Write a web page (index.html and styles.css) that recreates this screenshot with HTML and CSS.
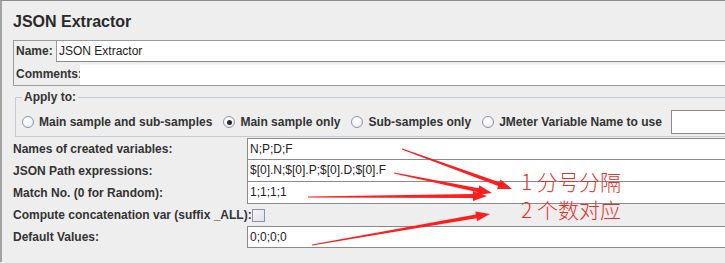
FILE: index.html
```html
<!DOCTYPE html>
<html>
<head>
<meta charset="utf-8">
<link rel="stylesheet" href="styles.css">
</head>
<body>
<div class="panel">
  <h1 class="title">JSON Extractor</h1>
  <div class="namebox">
    <div class="nrow"><span class="lbl">Name:</span><div class="field name-field">JSON Extractor</div></div>
    <div class="crow"><span class="lbl">Comments:</span><div class="field comment-field"></div></div>
  </div>
  <fieldset class="apply">
    <legend>Apply to:</legend>
    <div class="radios">
      <span class="opt"><span class="radio"></span><span class="rlbl">Main sample and sub-samples</span></span>
      <span class="opt"><span class="radio on"></span><span class="rlbl">Main sample only</span></span>
      <span class="opt"><span class="radio"></span><span class="rlbl">Sub-samples only</span></span>
      <span class="opt"><span class="radio"></span><span class="rlbl">JMeter Variable Name to use</span></span>
      <span class="varfield"></span>
    </div>
  </fieldset>
  <div class="form">
    <span class="flbl">Names of created variables:</span><div class="field row-field">N;P;D;F</div>
    <span class="flbl">JSON Path expressions:</span><div class="field row-field">$[0].N;$[0].P;$[0].D;$[0].F</div>
    <span class="flbl">Match No. (0 for Random):</span><div class="field row-field">1;1;1;1</div>
    <span class="flbl">Compute concatenation var (suffix _ALL):</span><div class="chkcell"><span class="chk"></span></div>
    <span class="flbl">Default Values:</span><div class="field row-field">0;0;0;0</div>
  </div>
  <div class="note n1">1 分号分隔</div>
  <div class="note n2">2 个数对应</div>
  <svg class="arrows" width="725" height="263" viewBox="0 0 725 263">
    <polygon points="401.83,149.47 498.12,186.08 497.09,188.9 512,189 500.51,179.5 499.48,182.32 402.17,148.53"/>
    <polygon points="393.9,173.49 477.9,192.16 477.3,195.1 492,193 479.3,185.3 478.7,188.24 394.1,172.51"/>
    <polygon points="308,197.5 473,198.1 473,201.1 487,196 473,191.1 473,194.1 308,196.5"/>
    <polygon points="312.09,245.49 476.54,218.37 477.06,221.33 490,214 475.34,211.48 475.86,214.43 311.91,244.51"/>
  </svg>
</div>
</body>
</html>
```

FILE: styles.css
```css
html, body {
  margin: 0;
  padding: 0;
  background: #eeeeee;
  overflow: hidden;
}
body {
  width: 725px;
  height: 263px;
  font-family: "Liberation Sans", Arial, sans-serif;
  font-size: 12px;
  color: #222;
}
.panel {
  position: relative;
  height: 262px;
  border-top: 1px solid #8c8c8c;
  border-left: 2px solid #a3a3a3;
  padding-left: 11px;
  box-sizing: border-box;
  overflow: hidden;
}
.title {
  margin: 0;
  height: 38px;
  line-height: 41px;
  font-size: 16px;
  font-weight: bold;
  color: #2a2a2a;
}
.namebox {
  border: 1px solid #9a9a9a;
  border-right: none;
  height: 46px;
  box-sizing: border-box;
  margin-top: 1px;
}
.lbl, .flbl, legend, .rlbl {
  font-weight: bold;
  color: #333;
}
.nrow {
  display: flex;
  align-items: stretch;
  height: 21px;
}
.nrow .lbl {
  padding-left: 2px;
  width: 40px;
  line-height: 21px;
}
.field {
  background: #fff;
  font-weight: normal;
  color: #222;
  white-space: nowrap;
}
.name-field {
  flex: 1;
  border-left: 1px solid #9a9a9a;
  border-bottom: 1px solid #8a8a8a;
  line-height: 20px;
  padding-left: 2px;
}
.crow {
  display: flex;
  height: 23px;
  align-items: stretch;
}
.crow .lbl {
  padding-left: 2px;
  width: 64px;
  line-height: 25px;
}
.comment-field {
  flex: 1;
  margin-top: 2px;
  border-top: 1px solid #f4f4f4;
}
.apply {
  margin: 4px 0 0 2px;
  padding: 0 0 0 6px;
  border: 1px solid #c4ccd6;
  border-right: none;
  height: 47px;
  box-sizing: border-box;
}
.apply legend {
  padding: 0 2px;
  margin-left: 0;
  line-height: 14px;
}
.radios {
  display: flex;
  align-items: center;
  height: 38px;
  margin-top: -1px;
  white-space: nowrap;
}
.opt {
  display: flex;
  align-items: center;
  gap: 5px;
  margin-right: 11px;
}
.radio {
  width: 10px;
  height: 10px;
  border-radius: 50%;
  border: 1px solid #8a97a6;
  background: radial-gradient(circle at 40% 35%, #ffffff 0%, #f2f4f7 55%, #d6dbe2 100%);
  position: relative;
  flex: none;
}
.radio.on::after {
  content: "";
  position: absolute;
  left: 2.5px;
  top: 2.5px;
  width: 5px;
  height: 5px;
  border-radius: 50%;
  background: #2b2b2b;
}
.opt:nth-child(4) {
  margin-right: 9px;
}
.varfield {
  flex: 1;
  height: 24px;
  background: #fff;
  border: 1px solid #8a8a8a;
  border-right: none;
  box-sizing: border-box;
}
.form {
  display: grid;
  grid-template-columns: 234px 1fr;
  grid-auto-rows: 22px;
  margin-top: 1px;
}
.flbl {
  line-height: 22px;
  white-space: nowrap;
}
.row-field {
  border: 1px solid #8a8a8a;
  border-right: none;
  line-height: 20px;
  padding-left: 2px;
}
.form .row-field + .flbl + .row-field {
  margin-top: -1px;
}
.chkcell {
  display: flex;
  align-items: center;
  padding-left: 5px;
}
.chk {
  width: 11px;
  height: 11px;
  border: 1px solid #8495ab;
  background: linear-gradient(135deg, #f4f6f9 0%, #dfe4ea 100%);
}
.note {
  position: absolute;
  left: 519px;
  font-family: "Noto Sans CJK SC", sans-serif;
  font-weight: 300;
  font-size: 21px;
  line-height: 24px;
  color: #e3322c;
  white-space: nowrap;
}
.n1 { top: 168px; }
.n2 { top: 196px; }
.arrows {
  position: absolute;
  left: -2px;
  top: -1px;
  pointer-events: none;
}
.arrows polygon {
  fill: #ff1e1e;
}
```
